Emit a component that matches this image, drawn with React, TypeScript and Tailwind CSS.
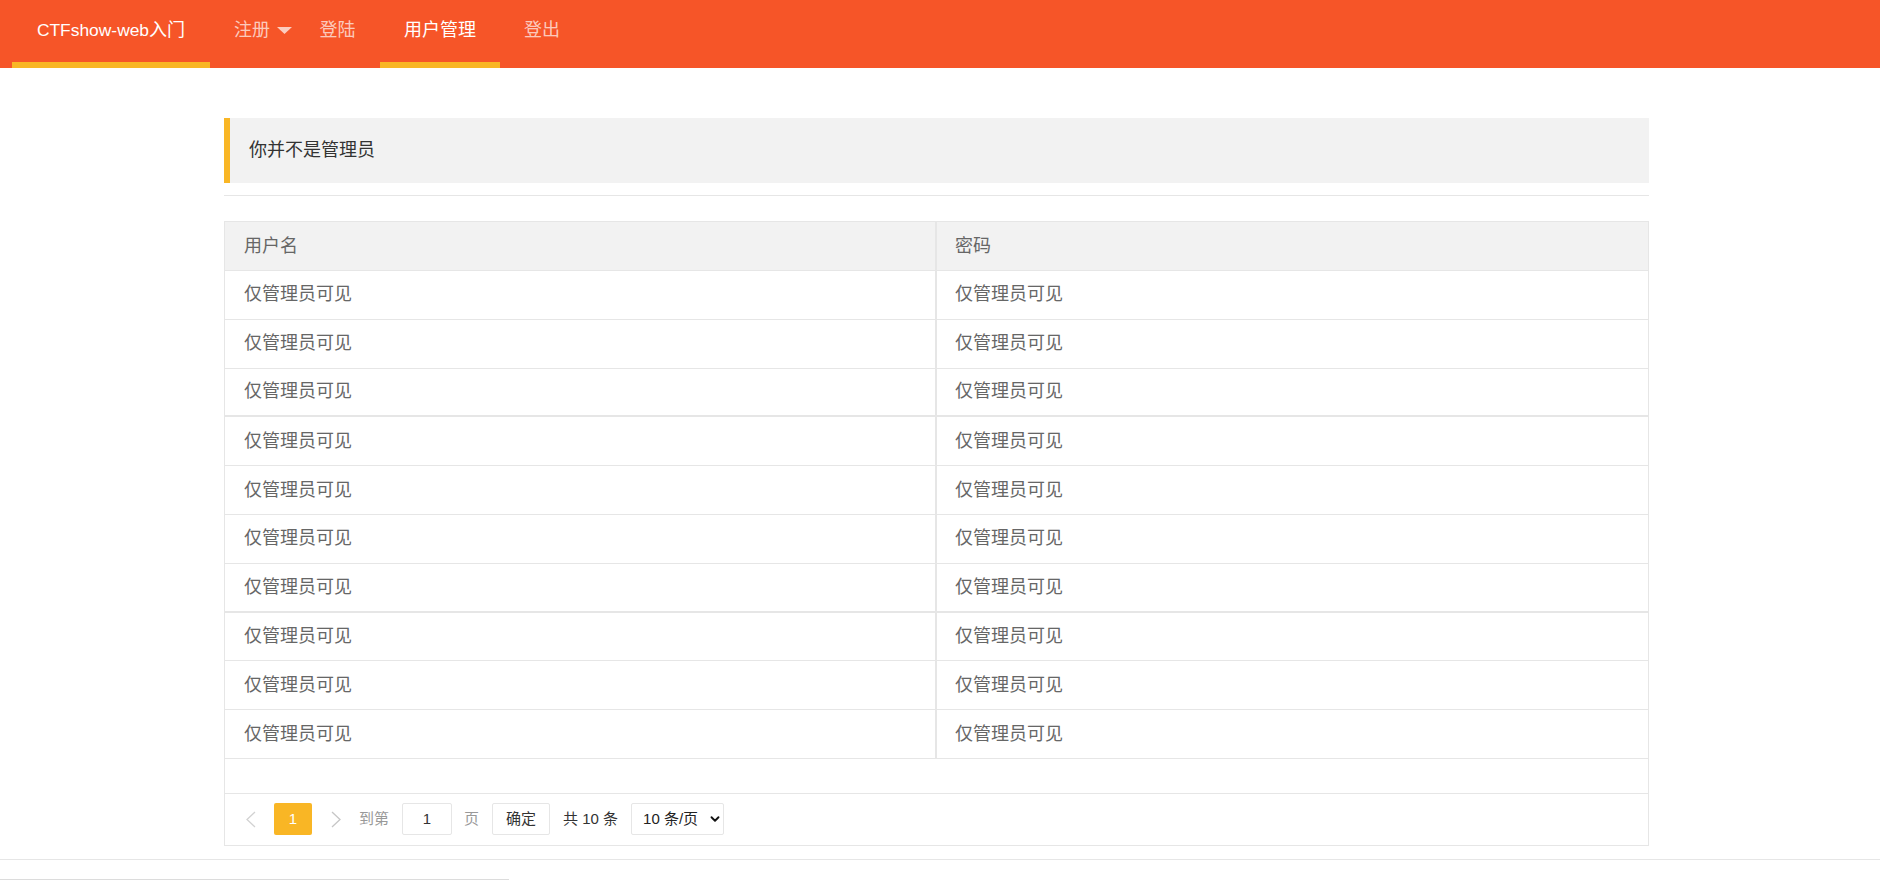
import { ChevronDown } from 'lucide-react'

const font = { fontFamily: '"Liberation Sans", "Noto Sans CJK SC", sans-serif' }

const rows = Array.from({ length: 10 }, (_, i) => i)

function Caret() {
  return (
    <svg width="15" height="7" viewBox="0 0 15 7" className="ml-[7px] mt-[1px]">
      <polygon points="0,0 15,0 7.5,7" fill="rgba(255,255,255,0.7)" />
    </svg>
  )
}

function Arrow({ dir, color }: { dir: 'left' | 'right'; color: string }) {
  return (
    <svg width="11" height="17" viewBox="0 0 11 17">
      <polyline
        points={dir === 'left' ? '10,1 2,8.5 10,16' : '1,1 9,8.5 1,16'}
        fill="none"
        stroke={color}
        strokeWidth="1.3"
      />
    </svg>
  )
}

export default function App() {
  return (
    <div className="min-h-screen bg-white" style={font}>
      <header className="h-[68px] bg-[#f65528] flex items-stretch pl-[12px] text-[18px]">
        <a className="w-[198px] flex items-center justify-center whitespace-nowrap pb-[2px] border-b-[6px] border-[#f9b625] text-white">
          <span className="text-[17.4px]">CTFshow-web</span>入门
        </a>
        <a className="w-[85px] flex items-center pl-[24px] pb-[2px] border-b-[6px] border-transparent text-white/70">
          注册
          <Caret />
        </a>
        <a className="w-[85px] flex items-center justify-center pb-[2px] border-b-[6px] border-transparent text-white/70">
          登陆
        </a>
        <a className="w-[120px] flex items-center justify-center pb-[2px] border-b-[6px] border-[#f9b625] text-white">
          用户管理
        </a>
        <a className="w-[84px] flex items-center justify-center pb-[2px] border-b-[6px] border-transparent text-white/70">
          登出
        </a>
      </header>

      <main className="ml-[224px] w-[1425px]">
        <div className="mt-[50px] h-[65px] bg-[#f2f2f2] border-l-[6px] border-[#f9b625] pl-[19px] flex items-center text-[18px] text-[#333]">
          你并不是管理员
        </div>
        <div className="mt-[12px] h-px bg-[#e6e6e6]" />

        <div className="mt-[25px] border border-[#e6e6e6] text-[18px] text-[#666]">
          <div className="grid grid-cols-[712px_1fr] h-[49px] bg-[#f2f2f2] border-b border-[#e6e6e6]">
            <div className="flex items-center pl-[19px] border-r-2 border-[#e6e6e6]">用户名</div>
            <div className="flex items-center pl-[18px]">密码</div>
          </div>
          {rows.map((i) => (
            <div
              key={i}
              className={
                i === 2 || i === 6
                  ? 'grid grid-cols-[712px_1fr] h-[48.8px] border-b-2 border-[#e6e6e6]'
                  : 'grid grid-cols-[712px_1fr] h-[48.8px] border-b border-[#e6e6e6]'
              }
            >
              <div className="flex items-center pl-[19px] border-r-2 border-[#e6e6e6]">仅管理员可见</div>
              <div className="flex items-center pl-[18px]">仅管理员可见</div>
            </div>
          ))}
          <div className="h-[35px] border-b border-[#e6e6e6]" />

          <div className="h-[51px] flex items-center pl-[20px] text-[15px] text-[#333]">
            <Arrow dir="left" color="#d2d2d2" />
            <span className="ml-[18px] w-[38px] h-[32px] rounded-[2px] bg-[#f9b625] text-white flex items-center justify-center">
              1
            </span>
            <span className="ml-[19px] flex">
              <Arrow dir="right" color="#c6c6c6" />
            </span>
            <span className="ml-[17px] text-[#999]">到第</span>
            <span className="ml-[13px] w-[50px] h-[32px] border border-[#e6e6e6] rounded-[2px] flex items-center justify-center">
              1
            </span>
            <span className="ml-[12px] text-[#999]">页</span>
            <span className="ml-[13px] w-[58px] h-[32px] border border-[#e6e6e6] rounded-[2px] flex items-center justify-center">
              确定
            </span>
            <span className="ml-[13px]">共 10 条</span>
            <span className="ml-[13px] w-[93px] h-[32px] border border-[#e6e6e6] rounded-[2px] flex items-center pl-[11px] text-[#222]">
              10 条/页
              <ChevronDown size={14} strokeWidth={3.2} className="ml-[10px] text-[#111]" />
            </span>
          </div>
        </div>
      </main>

      <div className="mt-[13px] h-px bg-[#e6e6e6]" />
      <div className="mt-[19px] w-[509px] h-px bg-[#dcdcdc]" />
    </div>
  )
}
